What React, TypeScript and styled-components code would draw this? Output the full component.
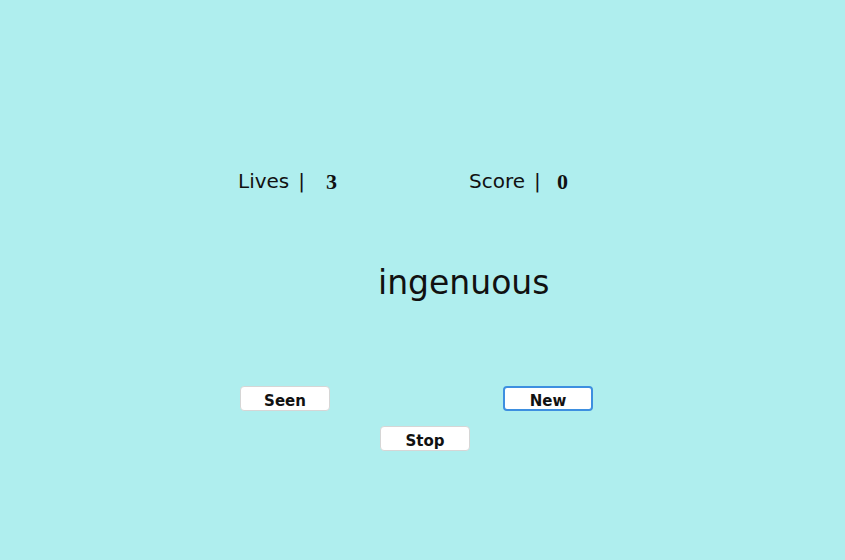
import { FC } from "react";
import styled, { createGlobalStyle } from "styled-components";

const GlobalStyle = createGlobalStyle`
    html, body {
        margin: 0;
        padding: 0;
        background: #afeeee;
    }
`;

interface StatProps {
    label: string;
    value: number;
}

const Stat: FC<StatProps> = ({ label, value }) => (
    <StyledStat>
        <StyledLabel>
            {label}
            <StyledBar>|</StyledBar>
        </StyledLabel>
        <StyledValue>{value}</StyledValue>
    </StyledStat>
);

export default function App() {
    return (
        <StyledPage>
            <GlobalStyle />
            <StyledBoard>
                <StyledStats>
                    <Stat label="Lives" value={3} />
                    <Stat label="Score" value={0} />
                </StyledStats>
                <StyledWord>ingenuous</StyledWord>
                <StyledChoices>
                    <StyledButton type="button">Seen</StyledButton>
                    <StyledButton type="button" $focused>
                        New
                    </StyledButton>
                </StyledChoices>
                <StyledFooter>
                    <StyledButton type="button">Stop</StyledButton>
                </StyledFooter>
            </StyledBoard>
        </StyledPage>
    );
}

const StyledPage = styled.div`
    min-height: 560px;
    background: #afeeee;
    font-family: "DejaVu Sans", Verdana, sans-serif;
    color: #111;
`;

const StyledBoard = styled.main`
    display: flex;
    flex-direction: column;
    width: 360px;
    margin-left: 238px;
    padding-top: 168px;
`;

const StyledStats = styled.div`
    display: grid;
    grid-template-columns: 231px 1fr;
    height: 24px;
`;

const StyledStat = styled.div`
    display: flex;
    align-items: center;
    gap: 20px;
`;

const StyledLabel = styled.span`
    width: 68px;
    font-size: 20px;
    line-height: 24px;
    white-space: nowrap;
`;

const StyledBar = styled.span`
    margin-left: 9px;
`;

const StyledValue = styled.span`
    font-family: "Liberation Serif", "Times New Roman", serif;
    font-weight: bold;
    font-size: 22px;
    line-height: 24px;
    padding-top: 2px;
`;

const StyledWord = styled.div`
    margin-top: 71px;
    padding-left: 140px;
    font-size: 33px;
    line-height: 40px;
`;

const StyledChoices = styled.div`
    display: flex;
    gap: 173px;
    margin-top: 83px;
    padding-left: 2px;
`;

const StyledFooter = styled.div`
    display: flex;
    margin-top: 15px;
    padding-left: 142px;
`;

const StyledButton = styled.button<{ $focused?: boolean }>`
    box-sizing: border-box;
    width: 90px;
    height: 25px;
    padding: 4px 0 0;
    background: #fff;
    border: ${({ $focused }) => ($focused ? "2px solid #3d8fe0" : "1px solid #d6d6d6")};
    border-radius: 4px;
    font-family: "DejaVu Sans", Verdana, sans-serif;
    font-weight: bold;
    font-size: 15px;
    line-height: 18px;
    color: #111;
    cursor: pointer;
`;
